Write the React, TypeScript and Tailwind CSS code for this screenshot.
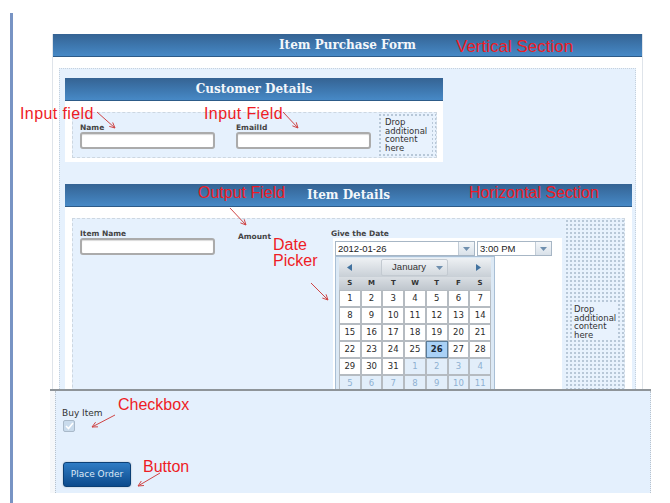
import React from "react";

// ─── SMALL PIECES ───────────────────────────────────────────────────────

const Bar = ({ title, className = "" }: { title: string; className?: string }) => (
  <div
    className={`h-[23px] shrink-0 flex items-center justify-center bg-linear-to-b from-[#356393] via-[#3d76ad] to-[#4789c6] border-b border-[#2d5b88] ${className}`}
  >
    <span className="font-['DejaVu_Serif',serif] font-bold text-[12px] leading-none text-[#f3f7fb]">
      {title}
    </span>
  </div>
);

const TextBox = ({ className = "" }: { className?: string }) => (
  <div
    className={`h-[17px] rounded-[3px] border-2 border-[#ababab] bg-white shadow-[inset_0_1px_1px_rgba(0,0,0,0.15)] ${className}`}
  />
);

const Label = ({ text, className = "" }: { text: string; className?: string }) => (
  <div className={`text-[7.5px] font-bold leading-[9px] text-[#444] whitespace-nowrap ${className}`}>
    {text}
  </div>
);

const DropZone = ({ className = "", textClass = "" }: { className?: string; textClass?: string }) => (
  <div
    className={`shrink-0 bg-[#e8f2fd] bg-[radial-gradient(circle,#b8c8d8_0.8px,transparent_1px)] bg-[length:4px_4px] ${className}`}
  >
    <div
      className={`bg-[#e8f2fd] text-[8.5px] leading-[8.5px] text-[#333] ${textClass}`}
    >
      Drop
      <br />
      additional
      <br />
      content
      <br />
      here
    </div>
  </div>
);

const Caret = () => (
  <svg width="7" height="4" viewBox="0 0 7 4">
    <polygon points="0,0 7,0 3.5,4" fill="#6f8fae" />
  </svg>
);

const ComboBox = ({ value, className }: { value: string; className: string }) => (
  <div
    className={`h-[15px] flex border border-[#a7b6c5] bg-white ${className}`}
  >
    <div className="flex-1 pl-[2px] font-['Liberation_Sans',sans-serif] text-[9.5px] leading-[13px] text-[#222]">
      {value}
    </div>
    <div className="w-[16px] flex items-center justify-center border-l border-[#c2ccd6] bg-linear-to-b from-[#f4f7fa] to-[#d9e1e9]">
      <Caret />
    </div>
  </div>
);

// ─── CALENDAR ───────────────────────────────────────────────────────────

const weeks = [
  [1, 2, 3, 4, 5, 6, 7],
  [8, 9, 10, 11, 12, 13, 14],
  [15, 16, 17, 18, 19, 20, 21],
  [22, 23, 24, 25, 26, 27, 28],
  [29, 30, 31, 1, 2, 3, 4],
  [5, 6, 7, 8, 9, 10, 11],
];

const Calendar = () => (
  <div className="w-[160px] border border-[#a9bfd5] bg-[#dce9f5] px-[3px] pt-[1px] pb-[3px]">
    <div className="h-[19px] flex items-center bg-linear-to-b from-[#eef1f4] to-[#c8cfd6] px-[8px]">
      <svg width="5" height="7" viewBox="0 0 5 7">
        <polygon points="5,0 5,7 0,3.5" fill="#41729f" />
      </svg>
      <div className="ml-[29px] w-[67px] h-[17px] flex items-center justify-center gap-[10px] border border-[#c3cad1] rounded-[2px] bg-linear-to-b from-[#f0f3f6] to-[#d3d9df]">
        <span className="font-['Liberation_Sans',sans-serif] text-[9.5px] text-[#333] ml-[6px]">
          January
        </span>
        <Caret />
      </div>
      <svg className="ml-auto mr-[2px]" width="5" height="7" viewBox="0 0 5 7">
        <polygon points="0,0 0,7 5,3.5" fill="#41729f" />
      </svg>
    </div>
    <div className="h-[13px] grid grid-cols-7 items-center bg-linear-to-b from-[#d9dee3] to-[#bfc6cd] text-center text-[7px] font-bold text-[#333]">
      {["S", "M", "T", "W", "T", "F", "S"].map((d, i) => (
        <span key={i}>{d}</span>
      ))}
    </div>
    <div className="grid grid-cols-7 gap-[2px] bg-[#b5bbc1] p-[1px]">
      {weeks.map((row, r) =>
        row.map((d, c) => {
          const other = r === 5 || (r === 4 && c >= 3);
          const sel = r === 3 && d === 26;
          const cls = sel
            ? "bg-[#a9d1f6] outline outline-1 outline-[#5a7c99] text-[#1d2a36] font-bold"
            : other
            ? "bg-[#e2eefa] text-[#8fb1d2]"
            : "bg-white text-[#2a2a2a]";
          return (
            <div
              key={`${r}-${c}`}
              className={`h-[15px] flex items-center justify-center text-[8.5px] ${cls}`}
            >
              {d}
            </div>
          );
        })
      )}
    </div>
  </div>
);

// ─── ANNOTATIONS ────────────────────────────────────────────────────────

const arrows: [number, number, number, number][] = [
  [97, 112, 115, 128],
  [283, 112, 298, 128],
  [230, 208, 246, 225],
  [311, 283, 328, 300],
  [115, 415, 92, 427],
  [160, 473, 138, 486],
];

const Arrows = () => (
  <svg className="absolute inset-0 pointer-events-none" width="670" height="503">
    {arrows.map(([x1, y1, x2, y2], i) => {
      const a = Math.atan2(y2 - y1, x2 - x1);
      const h = 6;
      const p1 = [x2 - h * Math.cos(a - 0.45), y2 - h * Math.sin(a - 0.45)];
      const p2 = [x2 - h * Math.cos(a + 0.45), y2 - h * Math.sin(a + 0.45)];
      return (
        <g key={i} stroke="#cf4545" strokeWidth="1" fill="none">
          <line x1={x1} y1={y1} x2={x2} y2={y2} />
          <polyline points={`${p1[0]},${p1[1]} ${x2},${y2} ${p2[0]},${p2[1]}`} />
        </g>
      );
    })}
  </svg>
);

const Note = ({ text, className }: { text: React.ReactNode; className: string }) => (
  <div
    className={`absolute font-['Liberation_Sans',sans-serif] text-[#ee1c25] leading-none whitespace-nowrap ${className}`}
  >
    {text}
  </div>
);

// ─── MAIN ───────────────────────────────────────────────────────────────

export default function App() {
  return (
    <div className="relative w-[670px] h-[503px] overflow-hidden bg-white pt-[13px] pl-[10px] font-['DejaVu_Sans',sans-serif] text-[#333]">
      <div className="h-[490px] flex flex-col border-l-[3px] border-[#7894c4]">
        {/* top screenshot: vertical section */}
        <div className="ml-[39px] mt-[21px] w-[591px] h-[355px] shrink-0 overflow-hidden flex flex-col bg-white border-x border-[#dfe4ea]">
          <Bar title="Item Purchase Form" />
          <div className="flex-1 px-[6px] pt-[11px]">
            <div className="h-full bg-[#e6f1fd] border border-dotted border-[#c5d1dd] pt-[9px] px-[5px]">
              {/* Customer Details */}
              <div className="w-[378px]">
                <Bar title="Customer Details" />
                <div className="bg-white pl-[7px] pr-[6px] pt-[11px] pb-[4px]">
                  <div className="h-[46px] flex bg-[#e6f1fd] border border-dashed border-[#cdd7e1] pl-[7px] pr-[1px]">
                    <div className="pt-[10px] w-[135px] shrink-0">
                      <Label text="Name" />
                      <TextBox className="w-[135px]" />
                    </div>
                    <div className="pt-[10px] ml-[21px] w-[135px] shrink-0">
                      <Label text="EmailId" />
                      <TextBox className="w-[135px]" />
                    </div>
                    <DropZone
                      className="ml-[7px] w-[58px] px-[4px] pt-[4px] pb-[4px]"
                      textClass="pl-[3px] pt-[1px] pb-[1px]"
                    />
                  </div>
                </div>
              </div>

              {/* Item Details */}
              <div className="w-[567px] mt-[22px]">
                <Bar title="Item Details" />
                <div className="bg-white px-[7px] pt-[11px]">
                  <div className="h-[220px] flex bg-[#e6f1fd] border border-dashed border-[#cdd7e1] pl-[7px]">
                    <div className="pt-[10px] w-[135px] shrink-0">
                      <Label text="Item Name" />
                      <TextBox className="w-[135px]" />
                    </div>
                    <div className="pt-[13px] ml-[23px] w-[93px] shrink-0">
                      <Label text="Amount" />
                    </div>
                    <div className="pt-[10px] w-[231px] shrink-0">
                      <Label text="Give the Date" className="leading-[8px]" />
                      <div className="ml-[2px] h-[200px] bg-white pl-[2px] pt-[3px]">
                        <div className="flex gap-[2px]">
                          <ComboBox value="2012-01-26" className="w-[140px]" />
                          <ComboBox value="3:00 PM" className="w-[75px]" />
                        </div>
                        <Calendar />
                      </div>
                    </div>
                    <DropZone
                      className="ml-auto w-[59px] pl-[7px] pr-[6px] pt-[85px]"
                      textClass="pl-[2px] py-[1px]"
                    />
                  </div>
                </div>
              </div>
            </div>
          </div>
        </div>

        {/* bottom screenshot: horizontal section */}
        <div className="ml-[37px] w-[601px] h-[104px] shrink-0 flex border-t-2 border-[#8e9499]">
          <div className="w-[5px] bg-[#f6f8fa]" />
          <div className="flex-1 bg-[#e4f0fd] border-x border-dotted border-[#b9c3cd] pl-[6px] pt-[17px]">
            <div className="text-[9px] leading-[11px] text-[#333]">Buy Item</div>
            <div className="ml-[1px] mt-[1px] w-[12px] h-[12px] rounded-[2px] border border-[#a9b9c9] bg-[#c9dbec] flex items-center justify-center">
              <svg width="9" height="8" viewBox="0 0 9 8">
                <polyline
                  points="1,4 3.5,6.5 8,1"
                  fill="none"
                  stroke="#ffffff"
                  strokeWidth="1.6"
                />
              </svg>
            </div>
            <button className="ml-[1px] mt-[30px] w-[68px] h-[25px] rounded-[3px] border border-[#0b3f75] bg-linear-to-b from-[#2f7cc4] to-[#0c4b8d] text-[9px] text-[#dde9f6] shadow-[0_0_2px_rgba(0,0,0,0.25)]">
              Place Order
            </button>
          </div>
        </div>
      </div>

      {/* red annotations */}
      <Arrows />
      <Note text="Input field" className="left-[20px] top-[106px] text-[16px] tracking-[0.4px]" />
      <Note text="Input Field" className="left-[204px] top-[106px] text-[16px] tracking-[0.4px]" />
      <Note text="Vertical Section" className="left-[456px] top-[38px] text-[17px]" />
      <Note text="Output Field" className="left-[198px] top-[185px] text-[16px]" />
      <Note text="Horizontal Section" className="left-[469px] top-[185px] text-[16px]" />
      <Note
        text={
          <>
            Date
            <br />
            Picker
          </>
        }
        className="left-[273px] top-[237px] text-[16px] leading-[22px]"
      />
      <Note text="Checkbox" className="left-[118px] top-[397px] text-[16px]" />
      <Note text="Button" className="left-[143px] top-[459px] text-[16px]" />
    </div>
  );
}
